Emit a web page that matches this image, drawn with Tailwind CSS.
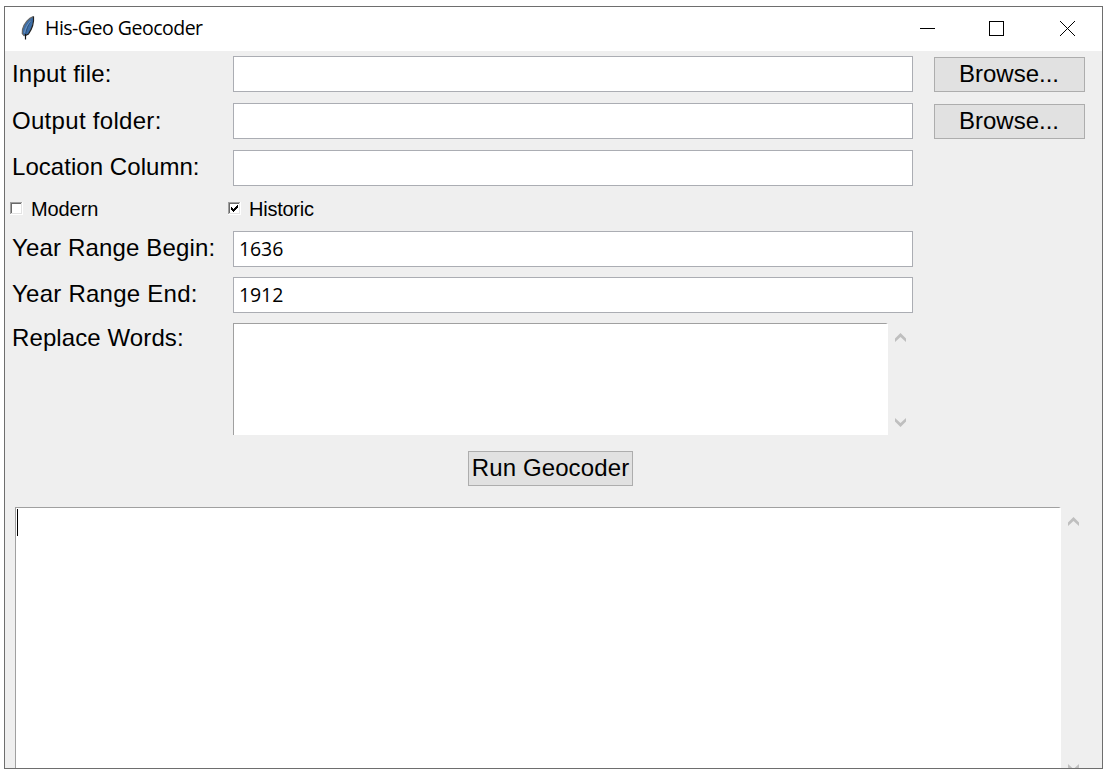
<!DOCTYPE html>
<html lang="en">
<head>
<meta charset="utf-8">
<title>His-Geo Geocoder</title>
<script src="https://cdn.jsdelivr.net/npm/@tailwindcss/browser@4"></script>
</head>
<body class="h-screen overflow-hidden bg-white pt-[6px] pl-[4px] text-black">
<div class="flex h-[763px] w-[1099px] flex-col overflow-hidden border border-[#6e6e6e] bg-[#efefef] font-['Liberation_Sans',Arial,sans-serif] text-[24px] leading-[36px]">
  <header class="flex h-[44px] shrink-0 items-center bg-white">
    <svg class="ml-[16px] mb-[2px] h-[24px] w-[14px] shrink-0" viewBox="0 0 14 24">
      <path d="M12.5 .5C8 2 3 7 1.5 13.500L1.200 17.500L3 20L7.500 18C11 13 12.500 7 12.500 .5Z" fill="#3c6ea8"/>
      <path d="M12.500 .5C8 2 3 7 1.500 13.500L1.300 17.500L3.500 20" fill="none" stroke="#666" stroke-width="1.200"/>
      <path d="M12.500 .5C13 6 11 13 7.500 18L4.500 19.500" fill="none" stroke="#222" stroke-width="1.200"/>
      <path d="M10.500 4C7.500 8 5 14 4.400 20" fill="none" stroke="#2b4a70" stroke-width=".8"/>
      <path d="M4.500 18V23.500" fill="none" stroke="#111" stroke-width="1.200"/>
      <path d="M10 4.500C6 9 4.500 12 3.500 17" fill="none" stroke="#8aa8c8" stroke-width=".7"/>
    </svg>
    <h1 class="ml-[10px] h-[44px] font-['Open_Sans',sans-serif] text-[19.5px] leading-[42px] tracking-[-0.5px] whitespace-nowrap">His-Geo Geocoder</h1>
    <svg class="mb-[2px] ml-auto h-[15px] w-[15px]" viewBox="0 0 15 15" shape-rendering="crispEdges"><path d="M0 7.500H15" stroke="#000"/></svg>
    <svg class="mb-[2px] ml-[54px] h-[15px] w-[15px]" viewBox="0 0 15 15" shape-rendering="crispEdges"><path d="M.5 .5H14.500V14.500H.5Z" fill="none" stroke="#000"/></svg>
    <svg class="mr-[27px] mb-[2px] ml-[56px] h-[15px] w-[15px]" viewBox="0 0 15 15"><path d="M0 0L15 15M15 0L0 15" stroke="#000"/></svg>
  </header>

  <main class="flex flex-col pt-[5px]">
    <div class="flex h-[36px]">
      <label class="w-[228px] pl-[7px] tracking-[0.2px]">Input file:</label>
      <div class="w-[680px] border border-[#abadb3] bg-white"></div>
      <button class="mt-px ml-[21px] h-[35px] w-[151px] border border-[#adadad] bg-[#e1e1e1] pr-px pb-[2px] leading-[31px]">Browse...</button>
    </div>
    <div class="mt-[11px] flex h-[36px]">
      <label class="w-[228px] pl-[7px] tracking-[0.3px]">Output folder:</label>
      <div class="w-[680px] border border-[#abadb3] bg-white"></div>
      <button class="mt-px ml-[21px] h-[35px] w-[151px] border border-[#adadad] bg-[#e1e1e1] pr-px pb-[2px] leading-[31px]">Browse...</button>
    </div>
    <div class="mt-[11px] flex h-[36px]">
      <label class="w-[228px] pl-[7px] leading-[34px] tracking-[0.05px]">Location Column:</label>
      <div class="w-[680px] border border-[#abadb3] bg-white"></div>
    </div>

    <div class="flex h-[45px] items-center text-[20px]">
      <label class="flex w-[218px] items-center pl-[5px]">
        <svg class="h-[13px] w-[13px]" viewBox="0 0 13 13" shape-rendering="crispEdges"><path d="M0 0H13V13H0Z" fill="#fff"/><path d="M.5 12V.5H12" fill="none" stroke="#a0a0a0"/><path d="M1.500 11V1.500H11" fill="none" stroke="#696969"/><path d="M1 11.500H11.500V1" fill="none" stroke="#e3e3e3"/></svg>
        <span class="ml-[8px] tracking-[-0.1px]">Modern</span>
      </label>
      <label class="flex items-center pl-[5px]">
        <svg class="h-[13px] w-[13px]" viewBox="0 0 13 13" shape-rendering="crispEdges"><path d="M0 0H13V13H0Z" fill="#fff"/><path d="M.5 12V.5H12" fill="none" stroke="#a0a0a0"/><path d="M1.500 11V1.500H11" fill="none" stroke="#696969"/><path d="M1 11.500H11.500V1" fill="none" stroke="#e3e3e3"/><path d="M3 5h1v1h1v1h1v-1h1v-1h1v-1h1v-1h1v3h-1v1h-1v1h-1v1h-1v1h-1v-1h-1v-1h-1z" fill="#000"/></svg>
        <span class="ml-[8px] tracking-[-0.25px]">Historic</span>
      </label>
    </div>

    <div class="flex h-[36px]">
      <label class="w-[228px] pl-[7px] leading-[34px] tracking-[0.16px] whitespace-nowrap">Year Range Begin:</label>
      <div class="w-[680px] border border-[#abadb3] bg-white pl-[5px] font-['Open_Sans',sans-serif] text-[19.5px] leading-[33px] tracking-[-0.1px]">1636</div>
    </div>
    <div class="mt-[10px] flex h-[36px]">
      <label class="w-[228px] pl-[7px] leading-[34px] tracking-[0.25px]">Year Range End:</label>
      <div class="w-[680px] border border-[#abadb3] bg-white pl-[5px] font-['Open_Sans',sans-serif] text-[19.5px] leading-[33px] tracking-[-0.1px]">1912</div>
    </div>
    <div class="mt-[10px] flex h-[112px]">
      <label class="w-[228px] pl-[7px] leading-[30px] tracking-[0.1px]">Replace Words:</label>
      <div class="w-[655px] border-t border-r-2 border-l border-[#a0a0a0] border-r-white bg-white"></div>
      <div class="flex flex-col justify-between pt-[10px] pb-[8px] pl-[7px]">
        <svg class="h-[9px] w-[11px]" viewBox="0 0 11 9"><path d="M0 9V5.500L5.500 0L11 5.500V9L5.500 4Z" fill="#bfbfbf"/></svg>
        <svg class="h-[9px] w-[11px]" viewBox="0 0 11 9"><path d="M0 0V3.500L5.500 9L11 3.500V0L5.500 5Z" fill="#bfbfbf"/></svg>
      </div>
    </div>

    <button class="mt-[16px] ml-[463px] h-[35px] w-[165px] border border-[#adadad] bg-[#e1e1e1] pb-[2px] leading-[31px] tracking-[0.12px] whitespace-nowrap">Run Geocoder</button>

    <div class="mt-[21px] ml-[10px] flex h-[261px]">
      <div class="w-[1046px] border-t border-r-2 border-l border-[#a0a0a0] border-r-white bg-white pt-px pl-px"><div class="h-[27px] w-px bg-black"></div></div>
      <div class="flex flex-col justify-between pt-[10px] pl-[7px]">
        <svg class="h-[9px] w-[11px]" viewBox="0 0 11 9"><path d="M0 9V5.500L5.500 0L11 5.500V9L5.500 4Z" fill="#bfbfbf"/></svg>
        <svg class="h-[4px] w-[11px]" viewBox="0 0 11 4"><path d="M0 0V3.500L.5 4H4.400L0 0ZM11 0V3.500L10.500 4H6.600Z" fill="#bfbfbf"/></svg>
      </div>
    </div>
  </main>
</div>
</body>
</html>
